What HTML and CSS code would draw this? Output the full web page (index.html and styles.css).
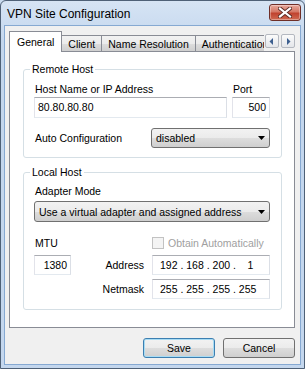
FILE: index.html
```html
<!DOCTYPE html>
<html lang="en">
<head>
    <meta charset="UTF-8">
    <title>VPN Site Configuration</title>
    <link rel="stylesheet" href="styles.css">
</head>
<body>
    <div class="window">
        <div class="titlebar">
            <span class="title">VPN Site Configuration</span>
            <div class="close">
                <svg width="14" height="11" viewBox="0 0 14 11">
                    <path d="M2 1.5 L12 9.5 M12 1.5 L2 9.5" stroke="#5a2a24" stroke-width="4" stroke-linecap="square"/>
                    <path d="M2 1.5 L12 9.5 M12 1.5 L2 9.5" stroke="#ffffff" stroke-width="2.2" stroke-linecap="square"/>
                </svg>
            </div>
        </div>

        <div class="dialog">
            <div class="tabstrip">
                <div class="tabs">
                    <div class="tab active">General</div>
                    <div class="tab">Client</div>
                    <div class="tab">Name Resolution</div>
                    <div class="tab">Authentication</div>
                </div>
                <div class="scroller">
                    <span class="arrow">
                        <svg width="6" height="7" viewBox="0 0 6 7"><path d="M4 0 L4 7 L0.5 3.5 Z" fill="#3d5f8f"/></svg>
                    </span>
                    <span class="arrow">
                        <svg width="6" height="7" viewBox="0 0 6 7"><path d="M2 0 L2 7 L5.5 3.5 Z" fill="#3d5f8f"/></svg>
                    </span>
                </div>
            </div>

            <div class="panel">
                <fieldset class="group">
                    <legend>Remote Host</legend>
                    <div class="row">
                        <span class="label grow">Host Name or IP Address</span>
                        <span class="label port-label">Port</span>
                    </div>
                    <div class="row fields">
                        <div class="field grow">80.80.80.80</div>
                        <div class="field port num">500</div>
                    </div>
                    <div class="row auto-row">
                        <span class="label auto-label">Auto Configuration</span>
                        <div class="combo grow">
                            <span>disabled</span>
                            <svg width="7" height="4" viewBox="0 0 7 4"><path d="M0 0 L7 0 L3.5 4 Z" fill="#000"/></svg>
                        </div>
                    </div>
                </fieldset>

                <fieldset class="group local">
                    <legend>Local Host</legend>
                    <div class="label">Adapter Mode</div>
                    <div class="combo adapter">
                        <span>Use a virtual adapter and assigned address</span>
                        <svg width="7" height="4" viewBox="0 0 7 4"><path d="M0 0 L7 0 L3.5 4 Z" fill="#000"/></svg>
                    </div>
                    <div class="addr-grid">
                        <span class="label">MTU</span>
                        <span></span>
                        <label class="check">
                            <span class="box"></span>
                            <span>Obtain Automatically</span>
                        </label>

                        <div class="field num">1380</div>
                        <span class="label right">Address</span>
                        <div class="field ip">192 . 168 . 200 .    1</div>

                        <span></span>
                        <span class="label right">Netmask</span>
                        <div class="field ip">255 . 255 . 255 . 255</div>
                    </div>
                </fieldset>
            </div>

            <div class="buttons">
                <button class="btn default">Save</button>
                <button class="btn">Cancel</button>
            </div>
        </div>
    </div>
</body>
</html>
```

FILE: styles.css
```css
* {
    margin: 0;
    padding: 0;
    box-sizing: border-box;
}

body {
    font-family: "Liberation Sans", Arial, sans-serif;
    font-size: 10.5px;
    color: #000;
    background: #c9dbef;
}

.window {
    width: 305px;
    height: 369px;
    display: flex;
    flex-direction: column;
    padding: 0 3px 3px;
    border: 1px solid #4f6177;
    border-radius: 6px 6px 0 0;
    background: linear-gradient(to bottom, #d6e4f4 0%, #c4d7ee 40px, #c4d7ee 100%);
}

/* title bar */

.titlebar {
    height: 25px;
    display: flex;
    justify-content: space-between;
    align-items: flex-start;
}

.title {
    font-size: 12px;
    line-height: 14px;
    padding: 6px 0 0 3px;
    color: #000;
}

.close {
    width: 32px;
    height: 17px;
    margin-top: 3px;
    border: 1px solid #6f2f28;
    border-radius: 3px;
    background: linear-gradient(to bottom, #e8a99c 0%, #d47866 45%, #c0432f 55%, #cf6a52 100%);
    display: flex;
    align-items: center;
    justify-content: center;
    box-shadow: inset 0 0 0 1px rgba(255, 255, 255, 0.35);
}

/* dialog body */

.dialog {
    flex: 1;
    display: flex;
    flex-direction: column;
    background: #f0f0f0;
    border: 1px solid #86a9d2;
    padding: 5px 5px 0 4px;
}

.tabstrip {
    height: 21px;
    display: flex;
    align-items: flex-start;
}

.tabs {
    flex: 1;
    height: 21px;
    display: flex;
    align-items: flex-end;
    overflow: hidden;
}

.tab {
    height: 16px;
    margin-bottom: 1px;
    margin-left: -1px;
    padding: 2px 6px 0;
    line-height: 13px;
    white-space: nowrap;
    border: 1px solid #898c95;
    border-bottom: none;
    background: linear-gradient(to bottom, #f2f2f2 0%, #ebebeb 50%, #dddddd 51%, #cfcfcf 100%);
}

.tab:first-child {
    margin-left: 0;
}

.tab.active {
    position: relative;
    z-index: 1;
    height: 21px;
    margin-bottom: 0;
    padding: 4px 7px 0;
    background: #fff;
}

.scroller {
    display: flex;
    gap: 2px;
    margin: 3px 0 0 1px;
}

.arrow {
    width: 14px;
    height: 14px;
    display: flex;
    align-items: center;
    justify-content: center;
    border: 1px solid #b4b8c0;
    border-radius: 2px;
    background: linear-gradient(to bottom, #fbfbfb, #e4e6ea);
}

.panel {
    flex: 1;
    margin-top: -1px;
    padding: 10px 12px 17px 13px;
    border: 1px solid #898c95;
    background: #fff;
}

/* group boxes */

.group {
    border: 1px solid #d5dfe5;
    border-radius: 3px;
    padding: 6px 11px 9px 10px;
}

.group.local {
    margin-top: 7px;
    padding-top: 5px;
    padding-bottom: 10px;
}

.group legend {
    margin-left: -4px;
    padding: 0 2px;
    line-height: 14px;
}

.label {
    line-height: 14px;
    padding-left: 1px;
    white-space: nowrap;
}

.row {
    display: flex;
    gap: 5px;
}

.grow {
    flex: 1;
}

.port-label {
    width: 38px;
}

.row.fields {
    margin-top: 1px;
}

.row.auto-row {
    margin-top: 10px;
    gap: 0;
    align-items: center;
}

.auto-label {
    width: 117px;
}

.field {
    height: 21px;
    padding: 0 3px;
    line-height: 19px;
    white-space: pre;
    background: #fff;
    border: 1px solid;
    border-color: #abadb3 #dbdfe6 #e3e9ef #e2e3ea;
}

.field.port {
    width: 38px;
}

.num {
    text-align: right;
}

.combo {
    height: 20px;
    padding: 0 4px 0 4px;
    display: flex;
    align-items: center;
    justify-content: space-between;
    border: 1px solid #707070;
    border-radius: 3px;
    background: linear-gradient(to bottom, #f2f2f2 0%, #ebebeb 50%, #dddddd 51%, #cfcfcf 100%);
}

.combo.adapter {
    height: 21px;
    margin-top: 3px;
}

.addr-grid {
    display: grid;
    grid-template-columns: 37px 1fr 118px;
    grid-template-rows: 16px 20px 20px;
    row-gap: 4px;
    margin-top: 13px;
    align-items: center;
}

.addr-grid .field {
    height: 20px;
    line-height: 18px;
}

.addr-grid .right {
    text-align: right;
    padding-right: 8px;
}

.field.ip {
    padding-left: 7px;
}

.check {
    display: flex;
    align-items: center;
    gap: 4px;
    color: #a0a0a0;
    line-height: 14px;
}

.box {
    width: 12px;
    height: 12px;
    border: 1px solid #c2c2c2;
    background: #f4f4f4;
}

/* buttons */

.buttons {
    height: 36px;
    display: flex;
    justify-content: flex-end;
    align-items: flex-start;
    gap: 8px;
    padding-top: 10px;
}

.btn {
    width: 72px;
    height: 20px;
    font-family: inherit;
    font-size: 10.5px;
    border: 1px solid #707070;
    border-radius: 3px;
    background: linear-gradient(to bottom, #f2f2f2 0%, #ebebeb 50%, #dddddd 51%, #cfcfcf 100%);
    color: #000;
}

.btn.default {
    border-color: #3c7fb1;
    box-shadow: inset 0 0 0 1px #a8dcf4;
}
```
